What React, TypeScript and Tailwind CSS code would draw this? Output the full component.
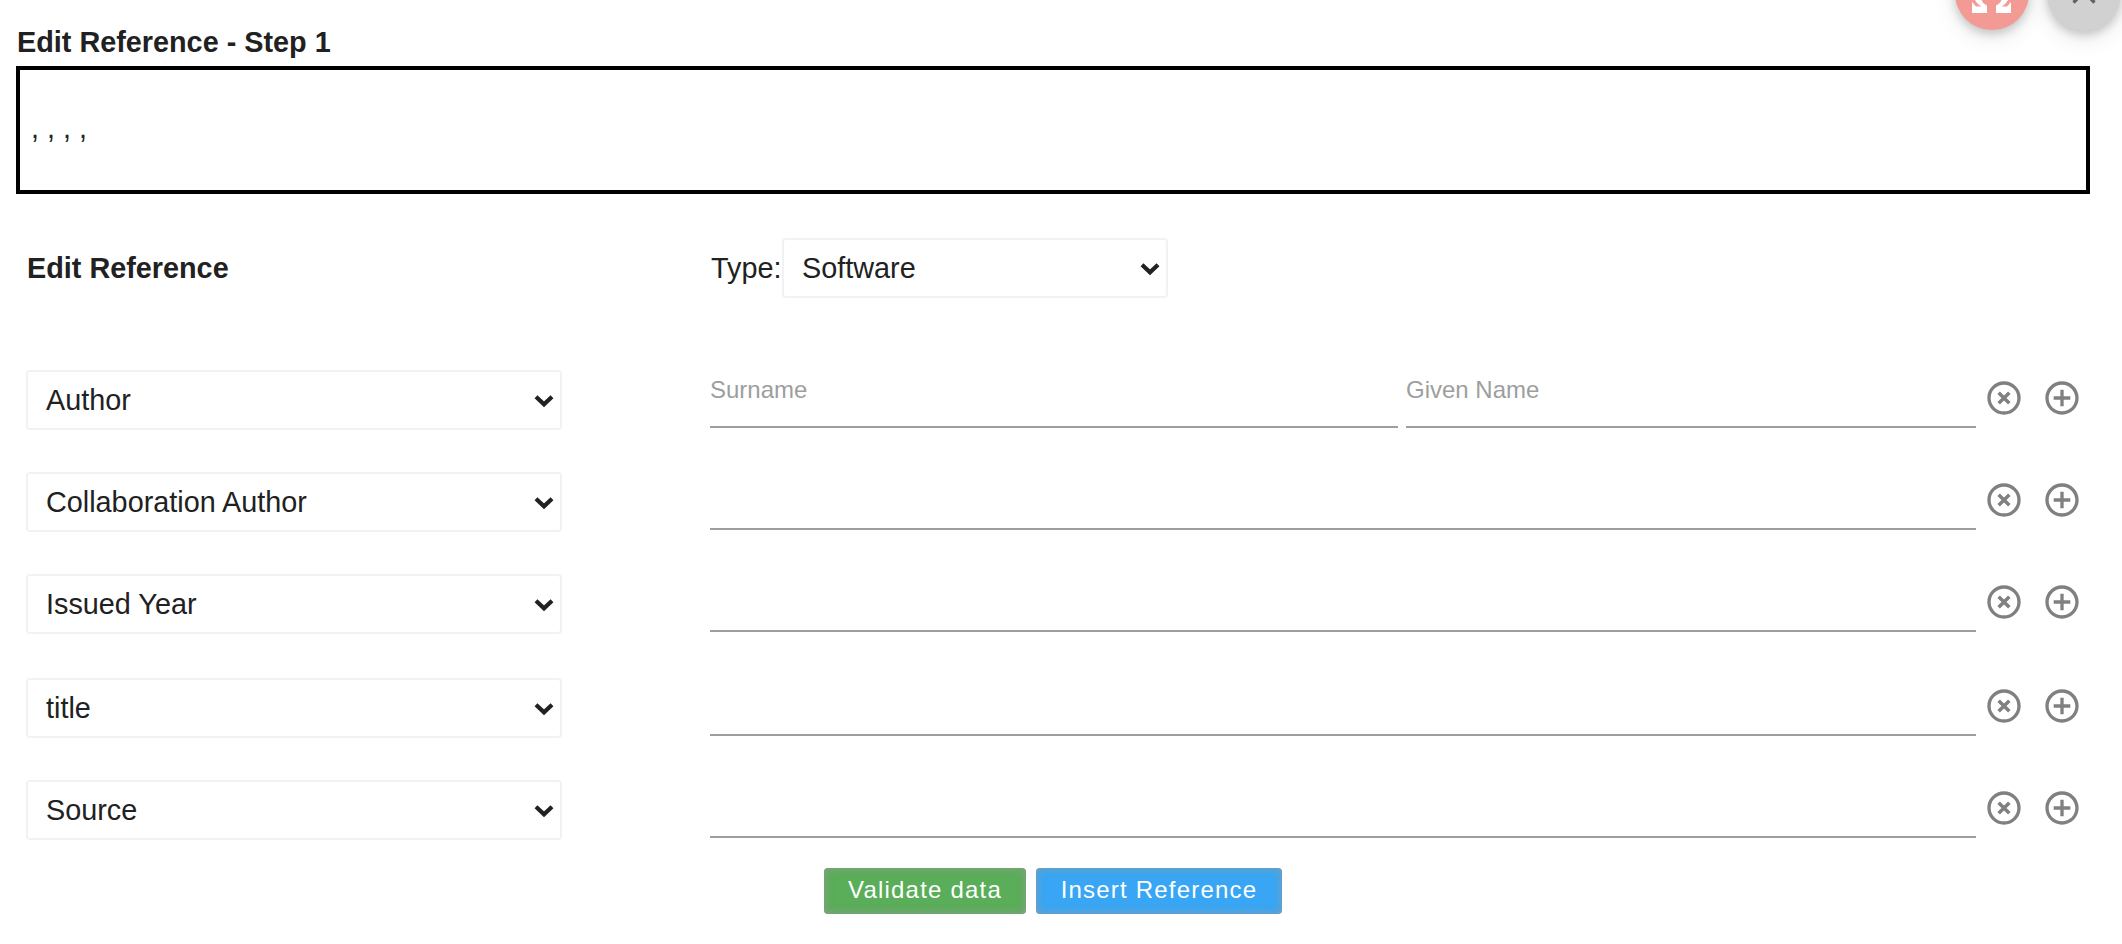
import { MdAddCircleOutline } from "react-icons/md";

const rows = [
  { label: "Author", author: true, gap: "mt-[72px]" },
  { label: "Collaboration Author", gap: "mt-[42px]" },
  { label: "Issued Year", gap: "mt-[42px]" },
  { label: "title", gap: "mt-[44px]" },
  { label: "Source", gap: "mt-[42px]" },
];

function Select({ label, width }: { label: string; width: string }) {
  return (
    <button
      className={`flex h-[60px] items-center justify-between rounded-[4px] border-2 border-[#f2f2f2] bg-white pl-[18px] pr-[6px] text-[28.8px] leading-[56px] ${width}`}
    >
      <span className="whitespace-nowrap">{label}</span>
      <svg viewBox="0 0 20 14" className="mt-px h-[14px] w-[20px]" fill="none" stroke="#212121" strokeWidth="4.2">
        <path d="M2 2.8 L10 10.3 L18 2.8" />
      </svg>
    </button>
  );
}

function Field({ label, width }: { label?: string; width: string }) {
  return (
    <div className={`h-[58px] border-b-2 border-[#9e9e9e] text-[24px] leading-[40px] text-[#9e9e9e] ${width}`}>
      {label}
    </div>
  );
}

function RemoveIcon() {
  return (
    <svg viewBox="0 0 24 24" className="size-[40px]" fill="none" stroke="currentColor">
      <circle cx="12" cy="12" r="9" strokeWidth="2" />
      <path d="M8.8 8.8 L15.2 15.2 M15.2 8.8 L8.8 15.2" strokeWidth="2.1" />
    </svg>
  );
}

export default function App() {
  return (
    <div className="relative h-[944px] w-[2122px] overflow-hidden bg-white font-['Liberation_Sans',Arial,sans-serif] text-[#212121]">
      <div className="absolute -top-[44px] left-[1955px] size-[74px] rounded-full bg-[#f39a94] shadow-[0_4px_10px_rgba(0,0,0,0.18),0_6px_24px_rgba(0,0,0,0.1)]">
        <svg viewBox="0 0 40 40" className="absolute left-[17px] top-[17px] size-[40px]" fill="white">
          <path d="M0 40 V29 L4 33.5 H9.5 C6 31.5 4.5 29.5 3 27 C1 24 0 21 0 17 C0 7 8 0 19.5 0 S39 7 39 17 C39 21 38 24 36 27 C34.5 29.5 33 31.5 29.5 33.5 H35 L39 29 V40 H24 V32.5 C27 31 28.5 29.5 29.5 27 C31 24 32 21 32 17 C32 10 27 5 19.5 5 S7 10 7 17 C7 21 8 24 9.5 27 C10.5 29.5 12 31 15 32.5 V40 Z" />
        </svg>
      </div>
      <div className="absolute -top-[43px] left-[2047px] size-[74px] rounded-full bg-[#d1d1d1] shadow-[0_4px_10px_rgba(0,0,0,0.18),0_6px_24px_rgba(0,0,0,0.1)]">
        <svg viewBox="0 0 24 24" className="absolute left-[23px] top-[21px] size-[28px]" stroke="#616161" strokeWidth="2.8">
          <path d="M3 3 L21 21 M21 3 L3 21" />
        </svg>
      </div>

      <main className="pl-4 pt-[26px]">
        <h1 className="h-10 pl-px text-[28.8px] font-bold leading-[32px]">Edit Reference - Step 1</h1>
        <div className="h-[128px] w-[2074px] border-4 border-black pl-[11px] text-[28.8px] leading-[116px]">, , , ,</div>

        <section className="pl-[10px]">
          <div className="mt-[44px] flex h-[60px] items-center">
            <h2 className="w-[684px] pl-px pt-0.5 text-[28.8px] font-bold">Edit Reference</h2>
            <span className="w-[72px] pl-px pt-0.5 text-[28.8px]">Type:</span>
            <Select label="Software" width="w-[386px]" />
          </div>

          {rows.map((row) => (
            <div key={row.label} className={`flex h-[60px] items-start ${row.gap}`}>
              <Select label={row.label} width="w-[536px]" />
              <div className="ml-[148px] flex w-[1266px] gap-2">
                {row.author ? (
                  <>
                    <Field label="Surname" width="w-[688px]" />
                    <Field label="Given Name" width="w-[570px]" />
                  </>
                ) : (
                  <Field width="w-full" />
                )}
              </div>
              <div className="ml-[8px] mt-[8px] flex gap-[18px] text-[#808080]">
                <RemoveIcon />
                <MdAddCircleOutline size={40} />
              </div>
            </div>
          ))}
        </section>

        <div className="ml-[808px] mt-[28px] flex gap-[10px] text-[24px] leading-[43px] tracking-[1.2px] text-white">
          <button className="h-[46px] w-[202px] rounded-[4px] bg-[#5aad59] pb-[3px] shadow-[inset_0_0_8px_rgba(153,153,153,0.85)]">Validate data</button>
          <button className="h-[46px] w-[246px] rounded-[4px] bg-[#38a6f4] pb-[3px] shadow-[inset_0_0_8px_rgba(153,153,153,0.85)]">Insert Reference</button>
        </div>
      </main>
    </div>
  );
}
